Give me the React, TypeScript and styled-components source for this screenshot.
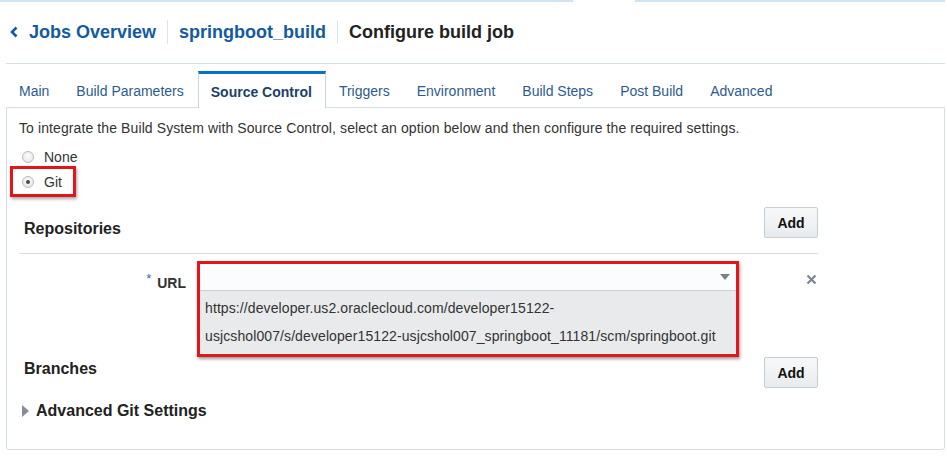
import React from "react";
import styled, { createGlobalStyle } from "styled-components";

const Global = createGlobalStyle`
  html, body { margin: 0; padding: 0; background: #fff; }
  body { font-family: "Liberation Sans", Arial, sans-serif; color: #333; }
`;

const Page = styled.div`
  width: 947px;
  height: 471px;
  overflow: hidden;
`;

const TopStrip = styled.div`
  height: 2px;
  background: linear-gradient(
    to right,
    #cfe3f5 0 573px,
    transparent 573px 635px,
    #cfe3f5 635px 945px,
    transparent 945px
  );
`;

const Header = styled.div`
  display: flex;
  align-items: center;
  height: 62px;
  box-sizing: border-box;
  padding: 0 0 1px 4px;
  margin: 0 2px 0 6px;
  border-bottom: 1px solid #d8e0e7;
`;

const Crumb = styled.a<{ $current?: boolean }>`
  display: inline-flex;
  align-items: center;
  gap: 11px;
  font-size: 18px;
  font-weight: bold;
  color: ${(p) => (p.$current ? "#222" : "#125ba1")};
  text-decoration: none;
  white-space: nowrap;
`;

const Sep = styled.span`
  width: 1px;
  height: 24px;
  background: #dfe4e9;
  margin: 0 11px 0 11px;
`;

const TabBar = styled.div`
  display: flex;
  margin: 7px 2px 0 6px;
  height: 36px;
  position: relative;
  z-index: 1;
`;

const Tab = styled.div<{ $active?: boolean }>`
  box-sizing: border-box;
  height: ${(p) => (p.$active ? "37px" : "36px")};
  padding: 1px 13px 0 12px;
  display: flex;
  align-items: center;
  font-size: 14px;
  white-space: nowrap;
  border-top: 3px solid ${(p) => (p.$active ? "#0a6fc8" : "transparent")};
  border-left: 1px solid ${(p) => (p.$active ? "#cbd4dc" : "transparent")};
  border-right: 1px solid ${(p) => (p.$active ? "#cbd4dc" : "transparent")};
  background: #fff;
  color: ${(p) => (p.$active ? "#1c3f68" : "#2d5b8f")};
  font-weight: ${(p) => (p.$active ? "bold" : "normal")};
`;

const Panel = styled.div`
  box-sizing: border-box;
  margin: 0 2px 0 6px;
  border: 1px solid #d6dde4;
  border-radius: 0 0 3px 3px;
  padding: 11px 12px 28px 12px;
  height: 343px;
`;

const Intro = styled.div`
  font-size: 14px;
  letter-spacing: 0.1px;
  line-height: 18px;
  color: #333;
`;

const RadioGroup = styled.div`
  display: flex;
  flex-direction: column;
  align-items: flex-start;
  margin-top: 7px;
`;

const RadioRow = styled.label<{ $highlight?: boolean }>`
  position: relative;
  display: inline-flex;
  align-items: center;
  height: 25px;
  font-size: 14px;
  color: #333;
  padding-left: 3px;
  gap: 10px;
  ${(p) =>
    p.$highlight &&
    `
    &::after {
      content: "";
      position: absolute;
      top: -3px;
      bottom: -3px;
      left: -9px;
      right: -14px;
      border: 3px solid #e3141a;
      box-shadow: 1px 2px 3px rgba(0,0,0,0.35);
      pointer-events: none;
    }
  `}
`;

const RadioDot = styled.span<{ $checked?: boolean }>`
  box-sizing: border-box;
  width: 12px;
  height: 12px;
  border-radius: 50%;
  border: 1px solid #b8bcc0;
  background: radial-gradient(circle at 50% 40%, #fbfbfb, #e3e4e6);
  display: inline-flex;
  align-items: center;
  justify-content: center;
  &::after {
    content: "";
    width: 4px;
    height: 4px;
    border-radius: 50%;
    background: ${(p) => (p.$checked ? "#4a4a4a" : "transparent")};
  }
`;

const Section = styled.div`
  width: 799px;
  margin-top: 13px;
`;

const SectionHead = styled.div<{ $divider?: boolean; $h: number; $textTop: number }>`
  display: flex;
  justify-content: space-between;
  align-items: flex-start;
  height: ${(p) => p.$h}px;
  box-sizing: border-box;
  border-bottom: ${(p) => (p.$divider ? "1px solid #d6dde4" : "none")};
  h3 {
    margin: ${(p) => p.$textTop}px 0 0 5px;
  }
`;

const Heading = styled.h3`
  font-size: 16px;
  line-height: 20px;
  font-weight: bold;
  color: #222;
`;

const AddButton = styled.button`
  box-sizing: border-box;
  width: 54px;
  height: 31px;
  border: 1px solid #c6cdd4;
  border-radius: 2px;
  background: linear-gradient(#f7f8f9, #e8ebee);
  font-family: "Liberation Sans", Arial, sans-serif;
  font-size: 14px;
  font-weight: bold;
  color: #111;
  padding: 0;
`;

const FieldRow = styled.div`
  display: grid;
  grid-template-columns: 167px 542px 1fr;
  column-gap: 11px;
  padding-top: 7px;
`;

const FieldLabel = styled.div`
  text-align: right;
  font-size: 14px;
  font-weight: bold;
  color: #333;
  padding-top: 14px;
  white-space: nowrap;
`;

const Req = styled.span`
  color: #2e6bb8;
  font-weight: normal;
  font-size: 13px;
  position: relative;
  top: -5px;
  margin-right: 6px;
`;

const SelectWrap = styled.div<{ $highlight?: boolean }>`
  box-sizing: border-box;
  border: 3px solid ${(p) => (p.$highlight ? "#e3141a" : "transparent")};
  box-shadow: ${(p) => (p.$highlight ? "1px 2px 3px rgba(0,0,0,0.4)" : "none")};
`;

const SelectInput = styled.div`
  box-sizing: border-box;
  height: 27px;
  background: #fbfcfd;
  border-bottom: 1px solid #c9d0d6;
  display: flex;
  align-items: center;
  justify-content: flex-end;
  padding-right: 6px;
`;

const Arrow = styled.span`
  width: 0;
  height: 0;
  border-left: 5px solid transparent;
  border-right: 5px solid transparent;
  border-top: 6px solid #7a8088;
`;

const Options = styled.div`
  background: #e9eaeb;
  padding: 3px 4px 3px 5px;
  font-size: 14px;
  letter-spacing: 0.1px;
  line-height: 28px;
  color: #333;
  border-bottom: 1px solid #f7f7f7;
`;

const Remove = styled.span`
  justify-self: end;
  margin-top: 13px;
  margin-right: 1px;
  color: #7d858e;
  display: inline-flex;
  align-self: start;
`;

const Disclosure = styled.div`
  display: flex;
  align-items: center;
  gap: 7px;
  padding-left: 3px;
  margin-top: 13px;
  font-size: 16px;
  line-height: 20px;
  font-weight: bold;
  color: #222;
`;

const Tri = styled.span`
  width: 0;
  height: 0;
  border-top: 6px solid transparent;
  border-bottom: 6px solid transparent;
  border-left: 7px solid #868d96;
`;

const tabs = [
  "Main",
  "Build Parameters",
  "Source Control",
  "Triggers",
  "Environment",
  "Build Steps",
  "Post Build",
  "Advanced",
];

export default function App() {
  return (
    <Page>
      <Global />
      <TopStrip />
      <Header>
        <Crumb href="#">
          <svg width="8" height="12" viewBox="0 0 8 12">
            <polyline
              points="6.5,1.5 2,6 6.5,10.5"
              fill="none"
              stroke="#125ba1"
              strokeWidth="2.6"
            />
          </svg>
          Jobs Overview
        </Crumb>
        <Sep />
        <Crumb href="#">springboot_build</Crumb>
        <Sep />
        <Crumb $current>Configure build job</Crumb>
      </Header>
      <TabBar>
        {tabs.map((t) => (
          <Tab key={t} $active={t === "Source Control"}>
            {t}
          </Tab>
        ))}
      </TabBar>
      <Panel>
        <Intro>
          To integrate the Build System with Source Control, select an option below and then
          configure the required settings.
        </Intro>
        <RadioGroup>
          <RadioRow>
            <RadioDot />
            None
          </RadioRow>
          <RadioRow $highlight>
            <RadioDot $checked />
            Git
          </RadioRow>
        </RadioGroup>
        <Section>
          <SectionHead $divider $h={47} $textTop={12}>
            <Heading>Repositories</Heading>
            <AddButton>Add</AddButton>
          </SectionHead>
          <FieldRow>
            <FieldLabel>
              <Req>*</Req>URL
            </FieldLabel>
            <SelectWrap $highlight>
              <SelectInput>
                <Arrow />
              </SelectInput>
              <Options>
                https://developer.us2.oraclecloud.com/developer15122-
                <br />
                usjcshol007/s/developer15122-usjcshol007_springboot_11181/scm/springboot.git
              </Options>
            </SelectWrap>
            <Remove>
              <svg width="11" height="11" viewBox="0 0 11 11">
                <path
                  d="M1.5 1.5 L9.5 9.5 M9.5 1.5 L1.5 9.5"
                  stroke="#7d858e"
                  strokeWidth="2.2"
                />
              </svg>
            </Remove>
          </FieldRow>
          <SectionHead $h={31} $textTop={2}>
            <Heading>Branches</Heading>
            <AddButton>Add</AddButton>
          </SectionHead>
        </Section>
        <Disclosure>
          <Tri />
          Advanced Git Settings
        </Disclosure>
      </Panel>
    </Page>
  );
}
